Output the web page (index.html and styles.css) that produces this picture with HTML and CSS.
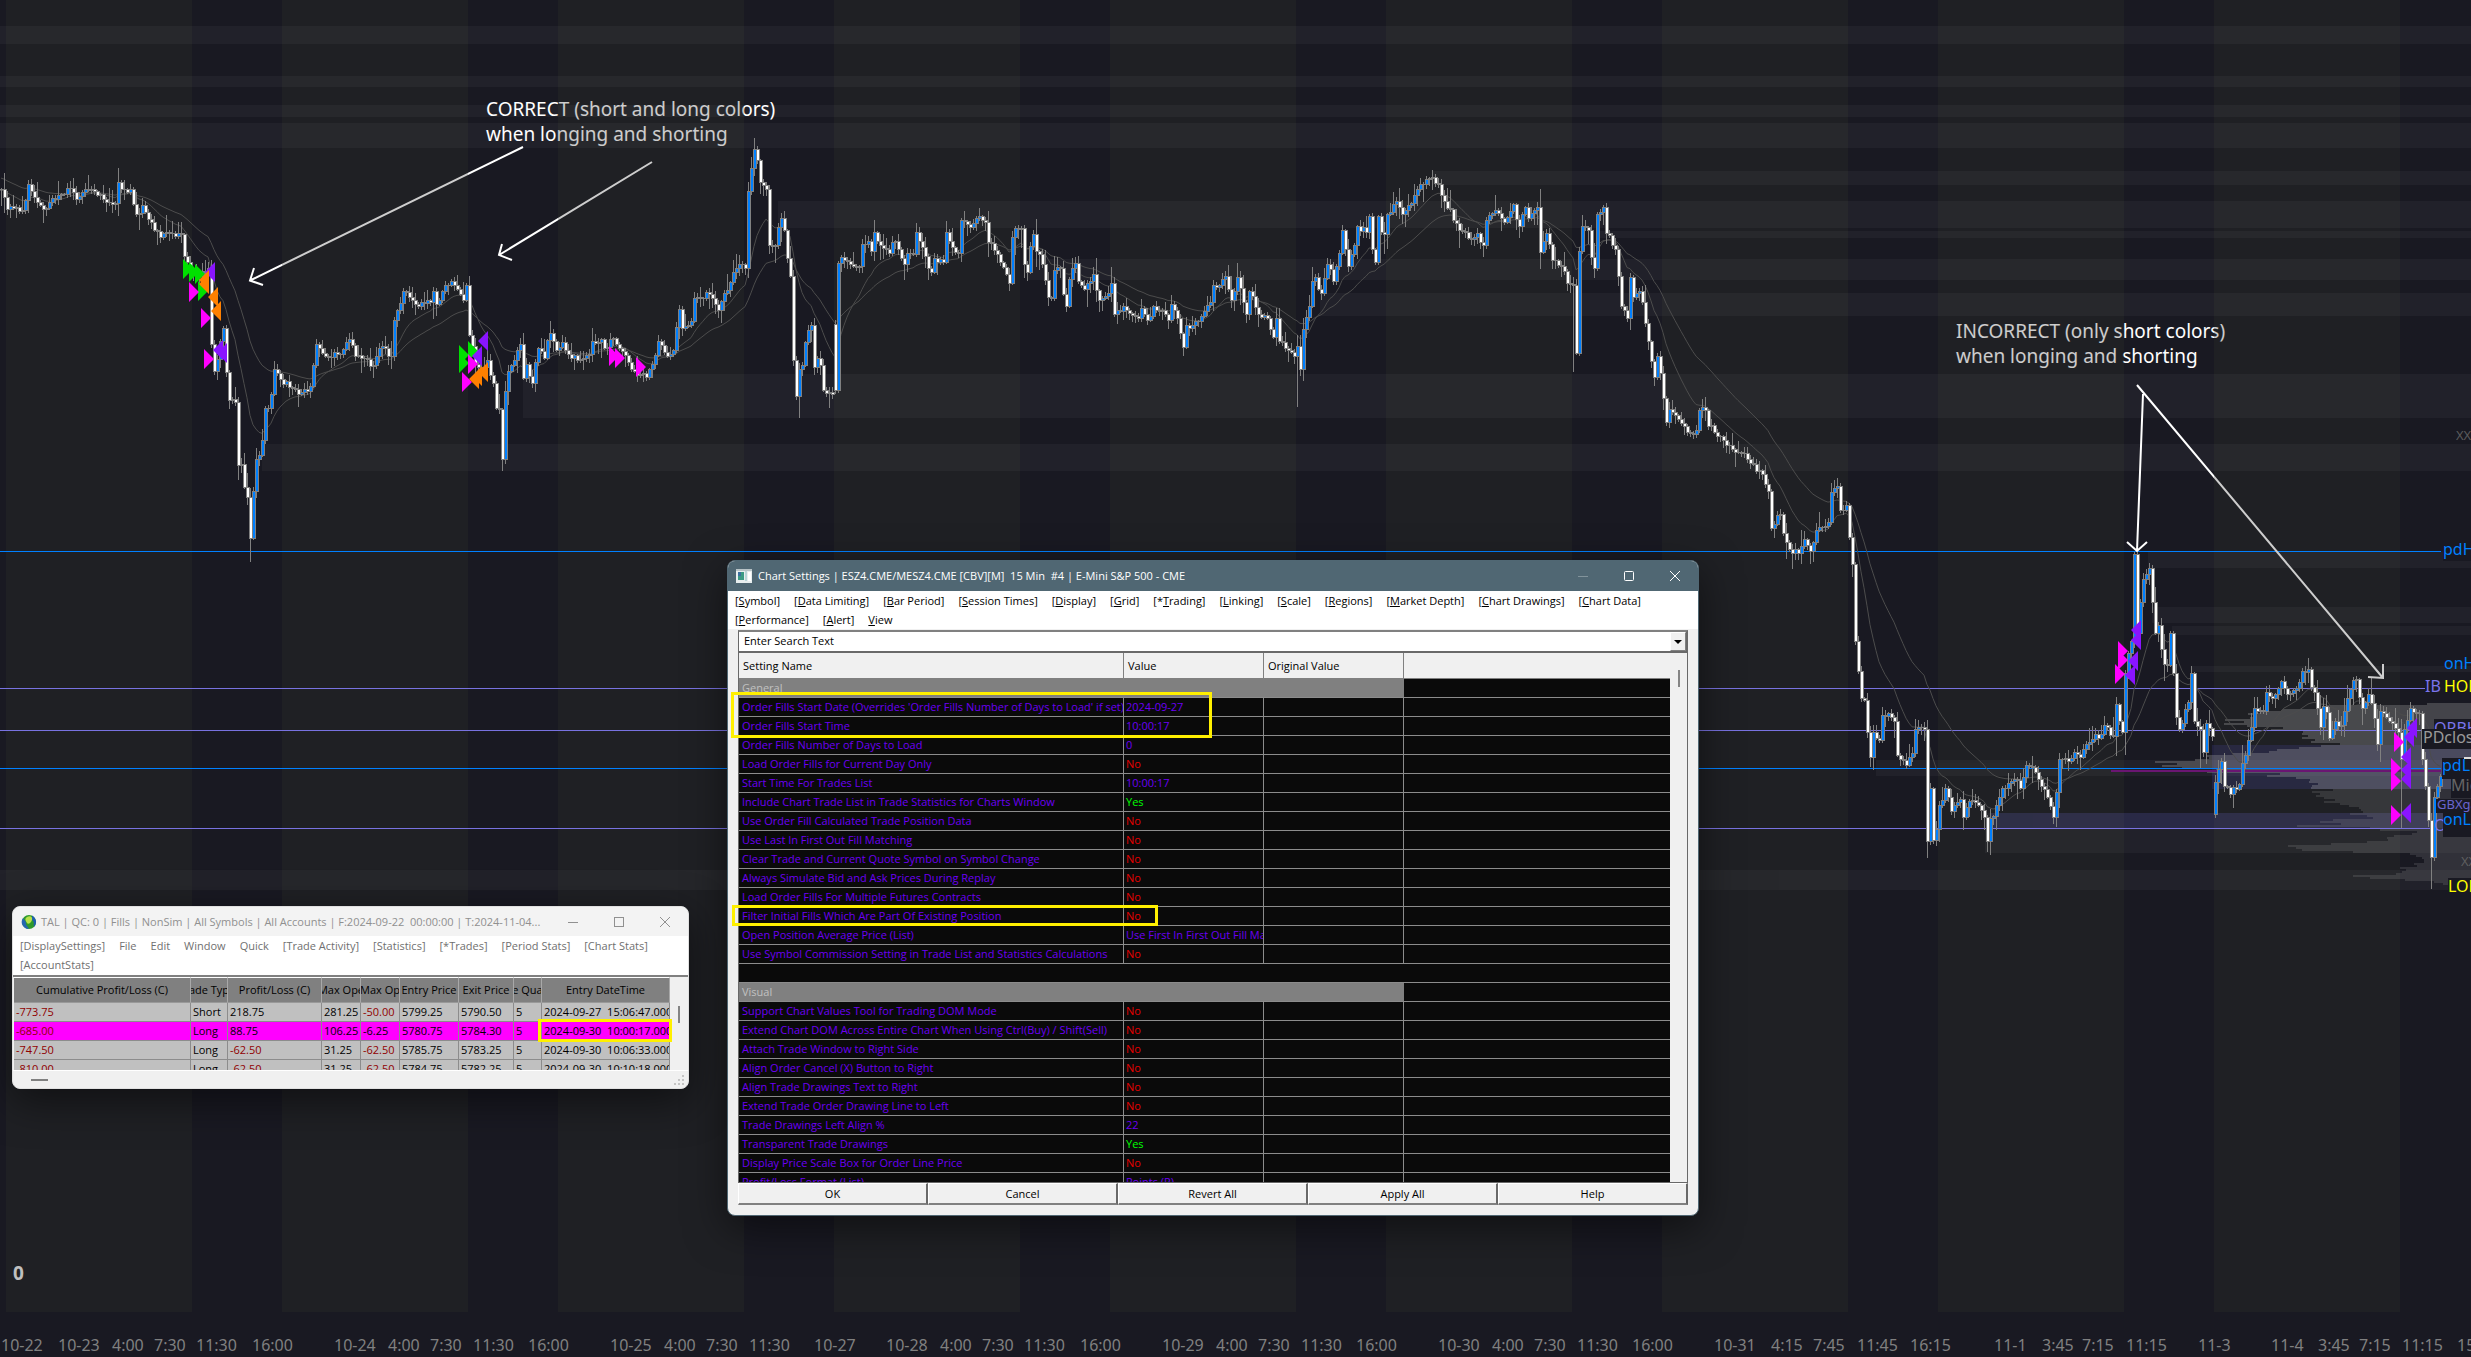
FILE: index.html
```html
<!DOCTYPE html>
<html lang="en">
<head>
<meta charset="utf-8">
<title>Chart Settings</title>
<link rel="stylesheet" href="styles.css">
</head>
<body>
<main class="desktop">
  <svg class="chart" role="img" aria-label="E-Mini S&amp;P 500 15 minute chart">
    <defs>
      <linearGradient id="note-ink" gradientUnits="userSpaceOnUse" x1="6" y1="0" x2="282" y2="0" spreadMethod="repeat">
        <stop offset="0" stop-color="#cdcdcd"/><stop offset=".674" stop-color="#cdcdcd"/>
        <stop offset=".674" stop-color="#fff"/><stop offset="1" stop-color="#fff"/>
      </linearGradient>
    </defs>
    <g class="zones">
      <rect x="0" y="26" width="100%" height="18"/>
      <rect x="0" y="76" width="100%" height="11"/>
      <rect x="0" y="105" width="100%" height="12"/>
      <rect x="0" y="123" width="100%" height="25"/>
      <rect x="1432" y="171" width="1100" height="14"/>
      <rect x="778" y="201" width="1700" height="27"/>
      <rect x="1600" y="231" width="900" height="7"/>
      <rect x="1028" y="259" width="1500" height="21"/>
      <rect x="1320" y="293" width="1200" height="23"/>
      <rect x="523" y="374" width="2000" height="44"/>
      <rect x="262" y="444" width="2300" height="27"/>
      <rect x="2148" y="551" width="400" height="17"/>
      <rect x="2152" y="607" width="400" height="16"/>
      <rect x="2172" y="626" width="400" height="9"/>
      <rect x="2192" y="666" width="400" height="6"/>
      <rect x="1876" y="760" width="600" height="16"/>
      <rect x="1985" y="813" width="500" height="40"/>
      <rect x="0" y="870" width="100%" height="20"/>
    </g>
    <g class="value-zones">
      <rect x="2212" y="745" width="300" height="44"/>
      <rect x="1990" y="813" width="500" height="15"/>
    </g>
    <g id="profile"></g>
    <g class="levels">
      <path class="control" d="M2111 771H2441"/>
      <path class="blue" d="M0 551.5H2441M0 768.5H2441"/>
      <path class="violet" d="M0 688.5H2425M0 730.5H2434M0 828.5H2436"/>
    </g>
    <g id="candles"></g>
    <g id="fills"></g>
    <g class="notes">
      <text x="486" y="116">CORRECT (short and long colors)</text>
      <text x="486" y="141">when longing and shorting</text>
      <text x="1956" y="338">INCORRECT (only short colors)</text>
      <text x="1956" y="363">when longing and shorting</text>
      <path d="M523 147L250 280.500M254 268L250 280.500L263 285M652 162L499 255M502 244L499 255L512 260"/>
      <path d="M2137 385L2383 678M2383 664V678L2368 677M2143 394L2137 551M2127 542L2137 551L2147 542"/>
    </g>
    <g class="labels">
      <text class="dim small" x="2456" y="440">XX</text>
      <rect x="2443" y="540" width="90" height="21"/><text class="blue" x="2443" y="555">pdH</text>
      <text class="blue" x="2444" y="669">onH</text>
      <rect x="2425" y="677" width="90" height="20"/>
      <text class="violet" x="2425" y="692">IB</text><text class="yellow" x="2444" y="692">HOD</text>
      <rect x="2434" y="719" width="90" height="12"/><text class="violet" x="2434" y="734">ORBH</text>
      <rect x="2422" y="729" width="90" height="20"/><text class="gray" x="2423" y="743">PDclose</text>
      <rect x="2442" y="758" width="90" height="21"/><text class="blue" x="2442" y="771">pdL</text>
      <rect x="2451" y="778" width="90" height="20"/><text class="dim" x="2451" y="791">Mid</text>
      <rect x="2436" y="799" width="90" height="14"/><text class="violet small" x="2437" y="809">GBXgap</text>
      <text class="violet" x="2434" y="831">O</text>
      <rect x="2443" y="813" width="90" height="24"/><text class="blue" x="2443" y="825">onL</text>
      <text class="dim small" x="2461" y="866">XX</text>
      <rect x="2448" y="878" width="90" height="20"/><text class="yellow" x="2448" y="892">LOD</text>
      <path class="last" d="M2464 758H2471"/>
    </g>
    <text class="count" x="13" y="1280">0</text>
    <g id="axis" class="axis"></g>
  </svg>

  <section class="window settings" aria-label="Chart Settings">
    <header class="titlebar">
      <svg class="app-icon" width="16" height="14" viewBox="0 0 16 14"><path fill="#e8eeee" d="M0 0h16v14H0z"/><path fill="#3c9a84" d="M2 3h6v8H2z"/><path fill="#3b6f9e" d="M2 3h3v4H2z"/><path fill="#b9d5d8" d="M9 2h2v10H9z"/><path fill="#fff" d="M12 3h3v9h-3z"/><path fill="#71828c" d="M0 0h16v2H0z" opacity=".4"/></svg>
      <h1>Chart Settings | ESZ4.CME/MESZ4.CME [CBV][M]&nbsp; 15 Min&nbsp; #4 | E-Mini S&amp;P 500 - CME</h1>
      <div class="controls">
        <button aria-label="Minimize" disabled><svg width="10" height="10"><path d="M0 5.500H10"/></svg></button>
        <button aria-label="Maximize"><svg width="10" height="10"><rect x=".5" y=".5" width="9" height="9" rx="1"/></svg></button>
        <button aria-label="Close"><svg width="10" height="10"><path d="M0 0L10 10M10 0L0 10"/></svg></button>
      </div>
    </header>
    <nav class="menu">
      <button>[<u>S</u>ymbol]</button><button>[<u>D</u>ata Limiting]</button><button>[<u>B</u>ar Period]</button><button>[<u>S</u>ession Times]</button><button>[<u>D</u>isplay]</button><button>[<u>G</u>rid]</button><button>[*<u>T</u>rading]</button><button>[<u>L</u>inking]</button><button>[<u>S</u>cale]</button><button>[<u>R</u>egions]</button><button>[<u>M</u>arket Depth]</button><button>[<u>C</u>hart Drawings]</button><button>[<u>C</u>hart Data]</button><button>[<u>P</u>erformance]</button><button>[<u>A</u>lert]</button><button><u>V</u>iew</button>
    </nav>
    <div class="body">
      <div class="combo">
        <input type="text" value="Enter Search Text" aria-label="Search settings">
        <button aria-label="Show searches"><svg width="8" height="4"><path d="M0 0H8L4 4Z"/></svg></button>
      </div>
      <div class="list">
        <table class="grid">
          <colgroup><col class="c-name"><col class="c-value"><col class="c-value"><col></colgroup>
          <thead><tr><th>Setting Name</th><th>Value</th><th>Original Value</th><th></th></tr></thead>
          <tbody>
            <tr class="group"><td colspan="3">General</td><td></td></tr>
            <tr><td>Order Fills Start Date (Overrides 'Order Fills Number of Days to Load' if set)</td><td>2024-09-27</td><td></td><td></td></tr>
            <tr><td>Order Fills Start Time</td><td>10:00:17</td><td></td><td></td></tr>
            <tr><td>Order Fills Number of Days to Load</td><td>0</td><td></td><td></td></tr>
            <tr><td>Load Order Fills for Current Day Only</td><td class="no">No</td><td></td><td></td></tr>
            <tr><td>Start Time For Trades List</td><td>10:00:17</td><td></td><td></td></tr>
            <tr><td>Include Chart Trade List in Trade Statistics for Charts Window</td><td class="yes">Yes</td><td></td><td></td></tr>
            <tr><td>Use Order Fill Calculated Trade Position Data</td><td class="no">No</td><td></td><td></td></tr>
            <tr><td>Use Last In First Out Fill Matching</td><td class="no">No</td><td></td><td></td></tr>
            <tr><td>Clear Trade and Current Quote Symbol on Symbol Change</td><td class="no">No</td><td></td><td></td></tr>
            <tr><td>Always Simulate Bid and Ask Prices During Replay</td><td class="no">No</td><td></td><td></td></tr>
            <tr><td>Load Order Fills For Multiple Futures Contracts</td><td class="no">No</td><td></td><td></td></tr>
            <tr><td>Filter Initial Fills Which Are Part Of Existing Position</td><td class="no">No</td><td></td><td></td></tr>
            <tr><td>Open Position Average Price (List)</td><td>Use First In First Out Fill Matching</td><td></td><td></td></tr>
            <tr><td>Use Symbol Commission Setting in Trade List and Statistics Calculations</td><td class="no">No</td><td></td><td></td></tr>
            <tr class="blank"><td colspan="4"></td></tr>
            <tr class="group"><td colspan="3">Visual</td><td></td></tr>
            <tr><td>Support Chart Values Tool for Trading DOM Mode</td><td class="no">No</td><td></td><td></td></tr>
            <tr><td>Extend Chart DOM Across Entire Chart When Using Ctrl(Buy) / Shift(Sell)</td><td class="no">No</td><td></td><td></td></tr>
            <tr><td>Attach Trade Window to Right Side</td><td class="no">No</td><td></td><td></td></tr>
            <tr><td>Align Order Cancel (X) Button to Right</td><td class="no">No</td><td></td><td></td></tr>
            <tr><td>Align Trade Drawings Text to Right</td><td class="no">No</td><td></td><td></td></tr>
            <tr><td>Extend Trade Order Drawing Line to Left</td><td class="no">No</td><td></td><td></td></tr>
            <tr><td>Trade Drawings Left Align %</td><td>22</td><td></td><td></td></tr>
            <tr><td>Transparent Trade Drawings</td><td class="yes">Yes</td><td></td><td></td></tr>
            <tr><td>Display Price Scale Box for Order Line Price</td><td class="no">No</td><td></td><td></td></tr>
            <tr><td>Profit/Loss Format (List)</td><td>Points (P)</td><td></td><td></td></tr>
          </tbody>
        </table>
        <div class="scroll"><i></i></div>
      </div>
      <div class="actions"><button>OK</button><button>Cancel</button><button>Revert All</button><button>Apply All</button><button>Help</button></div>
    </div>
    <span class="mark mark-dates"></span>
    <span class="mark mark-filter"></span>
  </section>

  <section class="window activity" aria-label="Trade Activity Log">
    <header class="titlebar">
      <svg class="app-icon" width="16" height="16" viewBox="0 0 16 16"><circle cx="8" cy="8" r="7" fill="#2f9a2c"/><path fill="#2566b0" d="M2 4a7 7 0 0 0 6 11c-1-3-4-4-3-7z"/><path fill="#1f5fae" d="M11 1.600a7 7 0 0 1 2 11.300c-1-3 1-5-2-7z"/><path fill="#b8e04a" d="M6 3c3-2 6 0 5 3S7 11 6 9 3 5 6 3z"/></svg>
      <h1>TAL | QC: 0 | Fills | NonSim | All Symbols | All Accounts | F:2024-09-22&nbsp; 00:00:00 | T:2024-11-04...</h1>
      <div class="controls">
        <button aria-label="Minimize"><svg width="10" height="10"><path d="M0 5.500H10"/></svg></button>
        <button aria-label="Maximize"><svg width="10" height="10"><rect x=".5" y=".5" width="9" height="9"/></svg></button>
        <button aria-label="Close"><svg width="10" height="10"><path d="M0 0L10 10M10 0L0 10"/></svg></button>
      </div>
    </header>
    <nav class="menu">
      <button>[DisplaySettings]</button><button>File</button><button>Edit</button><button>Window</button><button>Quick</button><button>[Trade Activity]</button><button>[Statistics]</button><button>[*Trades]</button><button>[Period Stats]</button><button>[Chart Stats]</button><button>[AccountStats]</button>
    </nav>
    <div class="trades">
      <div class="trades-view">
        <table>
          <colgroup><col class="t-cum"><col class="t-type"><col class="t-pl"><col class="t-max"><col class="t-max"><col class="t-entry"><col class="t-exit"><col class="t-qty"><col></colgroup>
          <thead><tr><th><span>Cumulative Profit/Loss (C)</span></th><th><span>ade Typ</span></th><th><span>Profit/Loss (C)</span></th><th><span>Max Ope</span></th><th><span>Max Op</span></th><th><span>Entry Price</span></th><th><span>Exit Price</span></th><th><span>e Qua</span></th><th><span>Entry DateTime</span></th></tr></thead>
          <tbody>
            <tr><td class="loss">-773.75</td><td>Short</td><td>218.75</td><td>281.25</td><td class="loss">-50.00</td><td>5799.25</td><td>5790.50</td><td>5</td><td>2024-09-27&nbsp; 15:06:47.000</td></tr>
            <tr class="picked"><td class="loss">-685.00</td><td>Long</td><td>88.75</td><td>106.25</td><td>-6.25</td><td>5780.75</td><td>5784.30</td><td>5</td><td>2024-09-30&nbsp; 10:00:17.000</td></tr>
            <tr><td class="loss">-747.50</td><td>Long</td><td class="loss">-62.50</td><td>31.25</td><td class="loss">-62.50</td><td>5785.75</td><td>5783.25</td><td>5</td><td>2024-09-30&nbsp; 10:06:33.000</td></tr>
            <tr><td class="loss">-810.00</td><td>Long</td><td class="loss">-62.50</td><td>31.25</td><td class="loss">-62.50</td><td>5784.75</td><td>5782.25</td><td>5</td><td>2024-09-30&nbsp; 10:10:18.000</td></tr>
          </tbody>
        </table>
      </div>
      <div class="scroll"><i></i></div>
    </div>
    <footer class="hscroll"><i></i><svg width="10" height="10"><path d="M8 0h2v2H8zM4 4h2v2H4zM8 4h2v2H8zM0 8h2v2H0zM4 8h2v2H4zM8 8h2v2H8z"/></svg></footer>
    <span class="mark mark-entry"></span>
  </section>
</main>
<script src="chart.js"></script>
</body>
</html>
```
FILE: styles.css
```css
* { box-sizing: border-box; }
body { margin: 0; font: 11px/16px "Open Sans", "Noto Sans", sans-serif; color: #000; }
button, input { font: inherit; color: inherit; border: 0; padding: 0; background: none; }

.desktop {
  position: relative;
  height: 100vh;
  overflow: hidden;
  background: #191922;
}
.desktop::before {
  content: "";
  position: absolute;
  inset: 0 0 45px;
  background: repeating-linear-gradient(90deg, #1f2024 0 186px, #191922 186px 276px) 6px 0 / 276px 100%;
  background-repeat: repeat-x;
}

.chart { position: absolute; inset: 0; width: 100%; height: 100%; font-family: "Noto Sans", sans-serif; font-size: 16px; }
.zones { fill: #fff; opacity: .035; }
.value-zones { fill: #6464ff; opacity: .13; }
.levels path { fill: none; stroke-width: 1; }
.levels .blue { stroke: #0080ff; }
.levels .violet { stroke: #7872e0; }
.levels .control { stroke: #6a1672; stroke-width: 2; }
.profile-value { fill: #aaa; opacity: .3; }
.profile-tail { fill: #aaa; opacity: .17; }

.average { fill: none; stroke: #4c4c4c; }
.wick, .body-edge { fill: #808080; }
.up { fill: #0080ff; }
.down { fill: #fff; }

.fill-green { fill: #00e000; }
.fill-magenta { fill: #f0f; }
.fill-violet { fill: #8a14ff; }
.fill-orange { fill: #ff8000; }

.notes text { fill: url(#note-ink); font-size: 19px; }
.notes path { fill: none; stroke: url(#note-ink); stroke-width: 2; }
.labels rect { fill: #191922; }
.labels .blue { fill: #0080ff; }
.labels .violet { fill: #7a74ec; }
.labels .yellow { fill: #ff0; }
.labels .gray { fill: #9a9a9a; }
.labels .dim { fill: #666; }
.labels .small { font-size: 13px; opacity: .85; }
.labels .last { stroke: #ddd; stroke-width: 2; }
.count { fill: #c0c0c0; font-size: 19px; font-weight: 700; }
.axis { fill: #808080; font-size: 16px; }

.window {
  position: absolute;
  display: flex;
  flex-direction: column;
  background: #f0f0f0;
  border-radius: 8px;
  box-shadow: 0 12px 40px rgba(0, 0, 0, .5);
}
.titlebar { display: flex; align-items: center; flex: none; border-radius: 7px 7px 0 0; }
.titlebar h1 { flex: 1; margin: 0 0 0 6px; font-size: 11px; font-weight: 400; white-space: nowrap; }
.app-icon { flex: none; margin-left: 8px; }
.controls { display: flex; flex: none; }
.controls button { width: 46px; display: grid; place-items: center; }
.controls svg { fill: none; stroke: currentColor; }
.menu { display: flex; flex-wrap: wrap; flex: none; background: #fff; }
.menu button { height: 19px; padding: 0 7px; }
.mark { position: absolute; border: 3px solid #fff000; pointer-events: none; }

.settings { left: 727px; top: 560px; width: 972px; height: 656px; border: 1px solid #506773; }
.settings .titlebar { height: 30px; background: #506773; color: #fff; }
.settings .controls button:disabled { color: #82939b; }
.settings .menu { height: 38px; }
.body { flex: 1; min-height: 0; display: flex; flex-direction: column; padding: 1px 10px 10px; }
.combo { display: flex; height: 22px; background: #fff; border: 1px solid #696969; border-top: 2px solid #808080; border-right-width: 2px; }
.combo input { flex: 1; padding: 0 0 2px 5px; outline: 0; }
.combo button { width: 16px; display: grid; place-items: center; background: #f0f0f0; border: 1px solid #fff; border-right-color: #808080; border-bottom-color: #808080; }
.list { flex: 1; min-height: 0; overflow: hidden; display: flex; border: 1px solid #696969; border-width: 1px 1px 0; }
.list .scroll { width: 17px; padding: 17px 0 0 8px; background: #f0f0f0; }
.scroll i { display: block; width: 2px; height: 17px; background: #858585; }
.grid { flex: 1; table-layout: fixed; border-spacing: 0; height: max-content; width: 0; background: #0a0a0a; color: #6c00f4; }
.c-name { width: 385px; }
.c-value { width: 140px; }
.grid th { height: 26px; padding: 0 4px; background: #f0f0f0; color: #000; font-weight: 400; text-align: left; border-right: 1px solid #808080; border-bottom: 1px solid #808080; }
.grid td { height: 19px; padding: 0 0 0 3px; overflow: hidden; white-space: nowrap; border-right: 1px solid #8c8c8c; border-bottom: 1px solid #8c8c8c; }
.grid td + td { padding-left: 2px; }
.grid th:last-child, .grid td:last-child, .grid .group td { border-right: 0; }
.grid .group td:first-child { background: #808080; color: #c0c0c0; }
.grid .no { color: #e60000; }
.grid .yes { color: #0f0; }
.actions { display: grid; grid-template-columns: repeat(5, 1fr); height: 23px; border-top: 1px solid #696969; }
.actions button { background: #f0f0f0; border: 1px solid #fff; border-right: 2px solid #696969; border-bottom: 2px solid #808080; }
.mark-dates { left: 3px; top: 131px; width: 481px; height: 46px; }
.mark-filter { left: 4px; top: 344px; width: 426px; height: 21px; }

.activity { left: 12px; top: 906px; width: 677px; height: 183px; color: #707070; border: 1px solid #e0e0e0; }
.activity .titlebar { height: 29px; background: #f3f3f3; color: #909090; }
.activity .titlebar h1 { margin-left: 4px; }
.activity .menu { height: 39px; align-content: flex-start; }
.trades { display: flex; height: 95px; border-top: 2px solid #808080; }
.trades-view { flex: 1; min-width: 0; overflow: hidden; padding-left: 1px; }
.trades .scroll { width: 18px; padding: 29px 0 0 8px; }
.trades table { width: 100%; table-layout: fixed; border-spacing: 0; color: #000; background: #c0c0c0; }
.t-cum { width: 177px; }
.t-type { width: 37px; }
.t-pl { width: 94px; }
.t-max { width: 39px; }
.t-entry { width: 59px; }
.t-exit { width: 55px; }
.t-qty { width: 28px; }
.trades th { height: 26px; padding: 0; background: #808080; font-weight: 400; overflow: hidden; border-right: 1px solid #a8a8a8; border-top: 1px solid #fff; border-bottom: 1px solid #999; }
.trades th span { display: flex; justify-content: center; white-space: nowrap; }
.trades td { height: 19px; padding: 0 0 0 2px; overflow: hidden; white-space: nowrap; border-right: 1px solid #8c8c8c; border-bottom: 1px solid #8c8c8c; }
.trades .loss { color: #900000; }
.trades .picked { background: #f0f; }
.hscroll { flex: 1; display: flex; align-items: center; justify-content: space-between; padding: 0 4px 0 18px; border-top: 1px solid #fff; }
.hscroll i { width: 17px; height: 2px; background: #808080; }
.hscroll svg { align-self: flex-end; margin-bottom: 3px; fill: #c4c4c4; }
.mark-entry { left: 525px; top: 112px; width: 134px; height: 23px; }
```
FILE: chart.js
```js
const NS = 'http://www.w3.org/2000/svg';
const add = (id, tag, attrs, text) => {
  const el = document.createElementNS(NS, tag);
  for (const k in attrs) el.setAttribute(k, attrs[k]);
  if (text) el.textContent = text;
  document.getElementById(id).appendChild(el);
};
let seed = 41;
const rnd = () => (seed = (seed * 16807) % 2147483647) / 2147483647;

// Swing points of the close, per screen panel, in panel units.
const SX = 830 / 1568, SY = 600 / 1568;
const panels = [
  [0, 0, '0,495 8,515 15,545 40,548 55,480 65,515 80,545 95,528 110,510 130,492 145,520 165,497 185,510 215,530 220,470 232,495 245,495 258,560 270,535 285,580 300,620 320,610 340,612 345,670 360,700 375,720 392,700 400,900 407,970 420,858 432,1045 442,1050 447,1215 452,1190 465,1300 470,1405 475,1350 482,1200 486,1160 492,1190 500,1065 508,1065 520,965 530,990 550,1015 565,1030 588,1010 592,955 598,900 612,930 640,925 660,885 670,930 690,935 702,955 720,905 737,930 743,835 750,810 763,760 785,795 810,790 818,760 825,795 835,760 850,735 865,755 872,785 878,745 882,850 890,905 900,950 910,970 920,940 930,1000 935,1065 943,1068 946,1200 950,1070 960,970 970,940 980,900 985,1010 992,950 1003,1000 1015,910 1028,935 1037,870 1050,915 1060,895 1075,925 1090,940 1110,925 1118,890 1135,885 1143,910 1155,885 1172,910 1185,945 1195,970 1218,985 1230,950 1245,892 1258,930 1270,915 1275,855 1280,808 1290,858 1305,840 1310,780 1340,768 1355,810 1370,765 1385,710 1398,690 1405,700 1410,580 1415,500 1420,440 1427,390 1435,475 1447,495 1453,640 1465,640 1473,570 1481,600 1490,720 1495,830 1501,1035 1507,965 1512,1015 1518,895 1530,850 1535,960 1543,935'],
  [820, 0, '0,955 8,1018 20,1030 26,1020 28,690 40,672 55,690 72,695 76,632 90,630 95,655 98,605 115,640 128,662 138,632 150,650 157,690 165,660 178,665 184,605 190,645 200,670 207,710 215,675 230,685 234,600 250,645 260,660 268,575 285,592 298,565 312,580 320,632 335,665 350,715 357,740 360,620 370,597 378,595 383,690 390,710 400,612 410,655 420,690 430,775 437,780 443,705 452,700 462,800 468,730 480,688 490,735 500,755 515,715 525,785 545,765 549,740 554,820 575,800 598,830 603,790 620,835 630,800 645,810 657,835 665,795 677,830 684,908 692,850 705,850 720,825 735,790 745,745 755,745 763,720 778,785 790,725 803,820 813,760 825,820 845,830 855,880 860,830 867,890 880,910 895,930 900,905 904,965 912,860 922,800 926,740 935,725 945,765 960,690 970,735 980,660 985,600 997,695 1005,665 1015,590 1030,605 1036,565 1046,685 1052,565 1058,605 1068,612 1072,560 1090,525 1100,558 1118,530 1125,495 1140,480 1155,463 1165,480 1177,525 1190,545 1195,575 1210,600 1230,625 1240,610 1252,640 1258,575 1273,548 1295,580 1308,532 1318,590 1330,540 1340,570 1352,542 1362,658 1370,610 1385,680 1400,695 1412,740 1422,745 1426,922 1430,695 1440,590 1450,600 1460,700 1468,560 1478,540 1487,610 1500,650 1510,720 1515,800 1523,830 1528,725 1538,775 1548,760'],
  [1640, 300, '12,60 17,106 24,200 29,130 38,190 45,255 47,320 55,285 70,310 90,345 107,340 112,288 125,288 130,330 150,355 165,378 190,400 210,425 228,455 240,500 250,595 262,560 268,610 280,650 300,660 312,625 320,655 335,600 353,580 357,515 370,485 380,550 388,535 393,620 398,690 403,830 410,970 415,1040 422,1045 427,1130 432,1195 438,1130 450,1150 455,1085 470,1080 482,1100 488,1190 500,1215 515,1185 522,1120 535,1120 540,1415 550,1275 556,1410 565,1320 578,1275 590,1335 602,1305 613,1350 620,1308 640,1320 652,1350 658,1415 663,1355 675,1320 682,1275 710,1255 720,1275 730,1215 742,1220 755,1270 770,1300 778,1350 785,1285 792,1200 808,1205 822,1180 832,1195 840,1160 858,1135 868,1145 875,1110 892,1140 896,1040 905,1100 913,1130 916,975 925,890 928,795 934,665 940,870 946,790 952,730 960,700 967,790 970,875 978,850 988,950 998,955 1004,870 1010,1090 1020,1120 1030,1070 1037,1050 1043,975 1048,1100 1058,1120 1062,1180 1068,1105 1080,1140 1085,1260 1092,1225 1097,1205 1105,1270 1113,1290 1130,1265 1140,1210 1150,1150 1160,1065 1178,1075 1184,1025 1195,1040 1212,995 1225,1030 1240,1015 1250,970 1260,965 1272,1025 1285,1115 1293,1060 1303,1145 1312,1100 1325,1110 1335,1040 1350,990 1366,1065 1378,1030 1395,1160 1400,1075 1420,1105 1430,1130 1438,1200 1445,1120 1455,1065 1470,1080 1480,1200 1487,1360 1490,1430 1496,1455 1500,1300 1510,1245']
];
const swings = panels.flatMap(([ox, oy, s]) => s.split(' ').map(p => {
  const [x, y] = p.split(',').map(Number);
  return [ox + x * SX, oy + y * SY];
}));
const priceAt = x => {
  let i = 1;
  while (i < swings.length - 1 && swings[i][0] < x) i++;
  const [a, b] = [swings[i - 1], swings[i]];
  const t = Math.min(1, Math.max(0, (x - a[0]) / (b[0] - a[0] || 1)));
  return a[1] + (b[1] - a[1]) * t;
};

// Lone long wicks: x, y of the far end.
const spikes = [[118, 168], [250, 562], [502, 471], [754, 138], [799, 418], [1298, 407], [1574, 372], [1987, 852], [2116, 756], [2125, 755], [2201, 768], [2401, 828], [2431, 889]];

// A swing close inside a candle's three pixels wins over the interpolated one.
const closeAt = x => {
  const hit = swings.find(([sx]) => Math.abs(sx - x) <= 1.5);
  return hit ? hit[1] : priceAt(x) + (rnd() - .5) * 6;
};

let wick = '', edge = '', up = '', down = '', open = priceAt(0);
let fast = open, slow = open - 12, fastD = '', slowD = '';
for (let x = 1; x < 2442; x += 3) {
  const close = Math.round(closeAt(x));
  if (x === 835) open = 324;
  if (x === 2215) open = 814;
  const top = Math.min(open, close), h = Math.max(1, Math.abs(close - open) + 1);
  let hi = Math.round(top - 1 - rnd() * rnd() * 18), lo = Math.round(top + h + 1 + rnd() * rnd() * 18);
  for (const [sx, sy] of spikes) if (Math.abs(sx - x) < 2) { hi = Math.min(hi, sy); lo = Math.max(lo, sy); }
  wick += `M${x} ${hi}h1V${lo}h-1z`;
  edge += `M${x - 1} ${top}h4v${h}h-4z`;
  if (h > 2) {
    const inner = `M${x} ${top + 1}h2v${h - 2}h-2z`;
    if (close < open) up += inner; else down += inner;
  }
  fast += (close - fast) / 8;
  slow += (close - slow) / 18;
  fastD += (fastD ? 'L' : 'M') + x + ' ' + fast.toFixed(1);
  slowD += (slowD ? 'L' : 'M') + x + ' ' + slow.toFixed(1);
  open = close;
}
add('candles', 'path', { class: 'average', d: fastD });
add('candles', 'path', { class: 'average', d: slowD });
add('candles', 'path', { class: 'wick', d: wick });
add('candles', 'path', { class: 'body-edge', d: edge });
add('candles', 'path', { class: 'up', d: up });
add('candles', 'path', { class: 'down', d: down });

// Volume profile: y, left edge.
const volume = [[702, 2440], [705, 2340], [709, 2280], [713, 2250], [723, 2235], [732, 2300], [740, 2330], [745, 2325], [750, 2260], [757, 2200], [763, 2165], [768, 2180], [773, 2260], [778, 2290], [785, 2310], [795, 2330], [803, 2345], [812, 2376], [825, 2315], [830, 2420], [836, 2400], [842, 2345], [846, 2290], [850, 2320], [853, 2390], [860, 2430], [866, 2390], [870, 2420], [876, 2355], [880, 2420], [888, 2445]];
let value = '', tail = '';
for (let y = 703; y < 888; y += 2) {
  let i = 1;
  while (volume[i][0] < y) i++;
  const [a, b] = [volume[i - 1], volume[i]];
  const x = Math.round(a[1] + (b[1] - a[1]) * (y - a[0]) / (b[0] - a[0]) + (rnd() - .5) * 46);
  const row = `M${x} ${y}H2600v2H${x}z`;
  if (y < 789) value += row; else tail += row;
}
add('profile', 'path', { class: 'profile-value', d: value });
add('profile', 'path', { class: 'profile-tail', d: tail });

// Fill markers: flat edge x, centre y; dir 1 points right, -1 points left.
const marks = {
  green: [1, '183,269 189,272 195,274 198,291 459,355 459,363 468,351'],
  magenta: [1, '189,292 201,318 204,359 468,364 462,382 609,356 615,358 636,367 2118,651 2118,660 2115,674 2394,742 2391,768 2391,781 2391,815'],
  violet: [-1, '215,272 223,350 227,353 488,341 482,356 2141,630 2141,640 2138,661 2135,675 2417,728 2414,737 2411,757 2411,770 2411,779 2411,813'],
  orange: [-1, '209,280 209,284 218,297 221,311 479,379 482,376 488,372']
};
for (const name in marks) {
  const [dir, pts] = marks[name];
  const d = pts.split(' ').map(p => {
    const [x, y] = p.split(',').map(Number);
    return `M${x} ${y - 10}L${x + 10 * dir} ${y}L${x} ${y + 10}z`;
  }).join('');
  add('fills', 'path', { class: 'fill-' + name, d });
}

const ticks = '1,10-22 58,10-23 112,4:00 154,7:30 196,11:30 252,16:00 334,10-24 388,4:00 430,7:30 473,11:30 528,16:00 610,10-25 664,4:00 706,7:30 749,11:30 814,10-27 886,10-28 940,4:00 982,7:30 1024,11:30 1080,16:00 1162,10-29 1216,4:00 1258,7:30 1301,11:30 1356,16:00 1438,10-30 1492,4:00 1534,7:30 1577,11:30 1632,16:00 1714,10-31 1771,4:15 1813,7:45 1857,11:45 1910,16:15 1994,11-1 2042,3:45 2082,7:15 2126,11:15 2198,11-3 2271,11-4 2318,3:45 2359,7:15 2402,11:15 2457,15:15';
for (const t of ticks.split(' ')) {
  const [x, label] = t.split(',');
  add('axis', 'text', { x, y: 1351 }, label);
}
```
